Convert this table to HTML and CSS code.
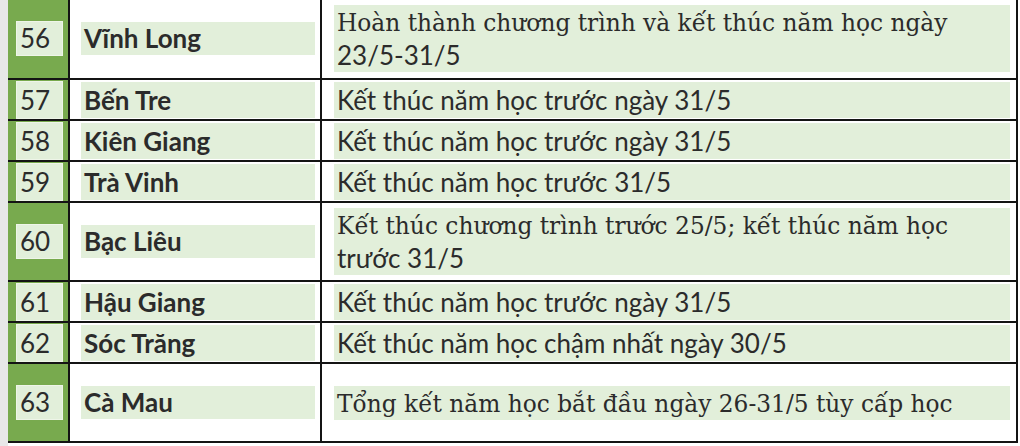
FILE: index.html
```html
<!DOCTYPE html>
<html lang="vi">
<head>
<meta charset="utf-8">
<title>Kết thúc năm học</title>
<link rel="stylesheet" href="styles.css">
</head>
<body>
<div class="page">
  <table class="grid">
    <colgroup>
      <col class="c-num">
      <col class="c-name">
      <col class="c-text">
    </colgroup>
    <tbody>
      <tr class="double first">
        <td class="num"><div class="box">56</div></td>
        <td class="name"><div class="box">Vĩnh Long</div></td>
        <td class="text"><div class="box"><span class="serif">Hoàn thành chương trình và kết thúc năm học ngày</span><br>23/5-31/5</div></td>
      </tr>
      <tr class="single">
        <td class="num"><div class="box">57</div></td>
        <td class="name"><div class="box">Bến Tre</div></td>
        <td class="text"><div class="box">Kết thúc năm học trước ngày 31/5</div></td>
      </tr>
      <tr class="single">
        <td class="num"><div class="box">58</div></td>
        <td class="name"><div class="box">Kiên Giang</div></td>
        <td class="text"><div class="box">Kết thúc năm học trước ngày 31/5</div></td>
      </tr>
      <tr class="single">
        <td class="num"><div class="box">59</div></td>
        <td class="name"><div class="box">Trà Vinh</div></td>
        <td class="text"><div class="box">Kết thúc năm học trước 31/5</div></td>
      </tr>
      <tr class="double">
        <td class="num"><div class="box">60</div></td>
        <td class="name"><div class="box">Bạc Liêu</div></td>
        <td class="text"><div class="box"><span class="serif">Kết thúc chương trình trước 25/5; kết thúc năm học</span><br>trước 31/5</div></td>
      </tr>
      <tr class="single">
        <td class="num"><div class="box">61</div></td>
        <td class="name"><div class="box">Hậu Giang</div></td>
        <td class="text"><div class="box">Kết thúc năm học trước ngày 31/5</div></td>
      </tr>
      <tr class="single">
        <td class="num"><div class="box">62</div></td>
        <td class="name"><div class="box">Sóc Trăng</div></td>
        <td class="text"><div class="box">Kết thúc năm học chậm nhất ngày 30/5</div></td>
      </tr>
      <tr class="double">
        <td class="num"><div class="box">63</div></td>
        <td class="name"><div class="box">Cà Mau</div></td>
        <td class="text"><div class="box"><span class="serif">Tổng kết năm học bắt đầu ngày 26-31/5 tùy cấp học</span></div></td>
      </tr>
    </tbody>
  </table>
</div>
</body>
</html>
```
FILE: styles.css
```css
html, body {
  margin: 0;
  padding: 0;
  background: #ffffff;
}

.page {
  width: 1012px;
  height: 446px;
  overflow: hidden;
  border-left: 8px solid #e8e8e8;
  font-family: Lato, "Open Sans", sans-serif;
  color: #2b2b2b;
}

.grid {
  border-collapse: collapse;
  table-layout: fixed;
  width: 1009px;
  margin-top: -3px;
}

.c-num { width: 61px; }
.c-name { width: 252px; }
.c-text { width: 696px; }

.grid td {
  border: 2px solid #141414;
  padding: 0;
  vertical-align: middle;
}

.grid td.num {
  border-left: none;
  background: #78aa4e;
  padding: 0 6px 0 9px;
}

.grid td.name {
  padding: 0 5px 0 11px;
}

.grid td.text {
  padding: 0 6px 0 12px;
}

.single { height: 41px; }
.double { height: 79px; }
.double.first { height: 81px; }

.box {
  background: #e2efda;
  line-height: 33px;
  padding: 0 3px;
  white-space: nowrap;
}

.single .box {
  line-height: 36px;
}

.num .box {
  font-size: 26px;
  box-shadow: 0 0 0 1px #eef5e8;
}

.name .box {
  font-size: 26px;
  font-weight: 700;
}

.text .box {
  font-size: 26px;
}

.serif {
  font-family: "DejaVu Serif", "Liberation Serif", serif;
  font-size: 23.3px;
}
```
